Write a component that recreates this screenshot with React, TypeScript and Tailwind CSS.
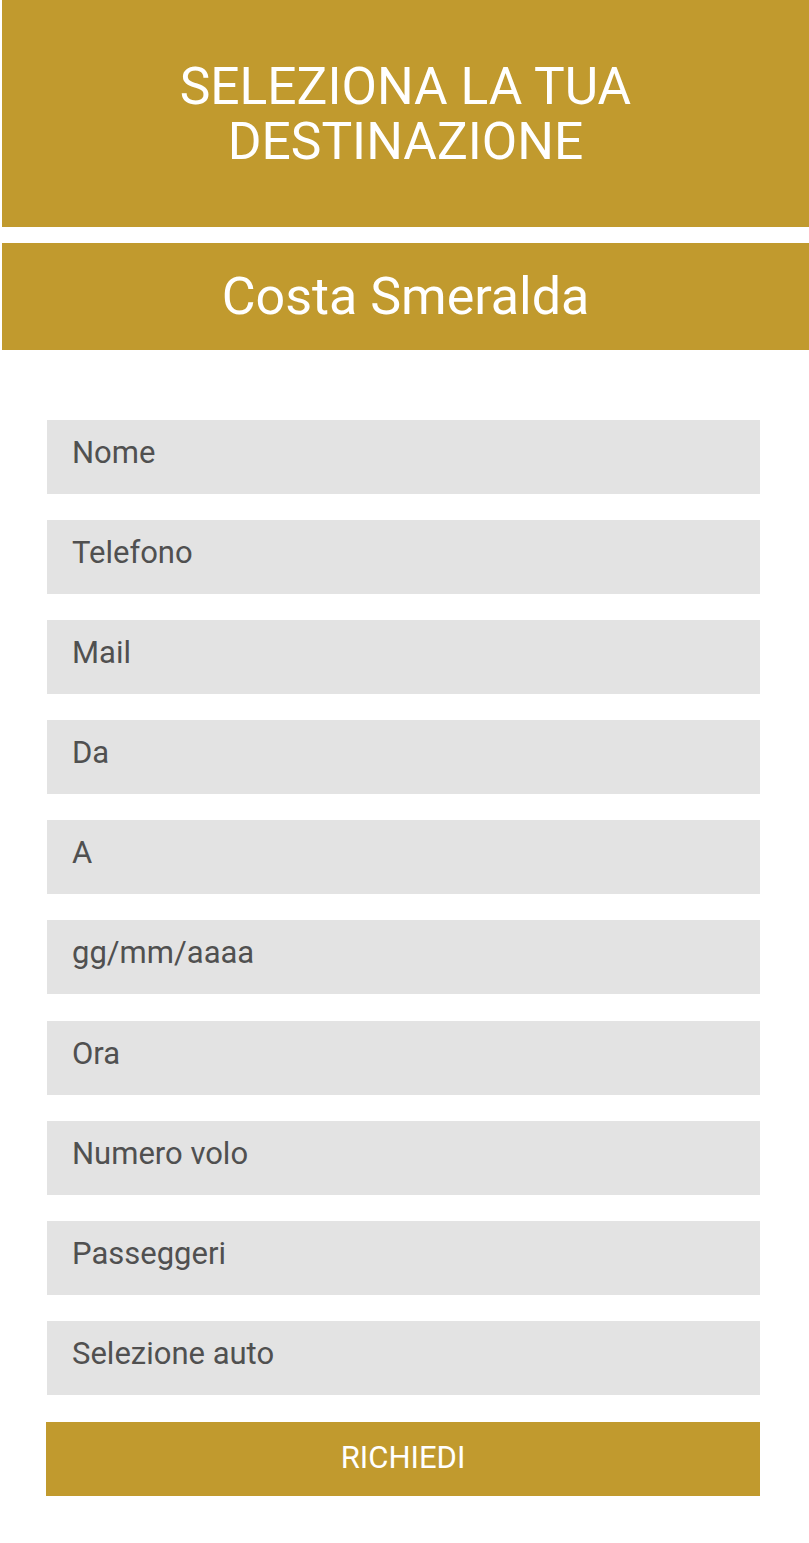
const fields = [
  'Nome',
  'Telefono',
  'Mail',
  'Da',
  'A',
  'gg/mm/aaaa',
  'Ora',
  'Numero volo',
  'Passeggeri',
  'Selezione auto',
];

export default function App() {
  return (
    <div className="w-full min-h-[1543px] bg-white pl-[2px] font-['Roboto',sans-serif]">
      {/* heading */}
      <div className="h-[227px] bg-[#c19a2e] flex items-center justify-center">
        <h1 className="text-center text-white text-[51.5px] leading-[55px]">
          SELEZIONA LA TUA
          <br />
          DESTINAZIONE
        </h1>
      </div>

      <div className="mt-[16px] h-[107px] bg-[#c19a2e] flex items-center justify-center">
        <h2 className="text-white text-[52px] leading-none">Costa Smeralda</h2>
      </div>

      <form className="pt-[70px] pl-[45px] w-[758px] flex flex-col gap-[26.1px]">
        {fields.map((f) => (
          <div
            key={f}
            className="h-[74px] bg-[#e3e3e3] pl-[25px] pt-[17px] text-[31px] leading-none text-[#505050]"
          >
            {f}
          </div>
        ))}
        <button
          type="button"
          className="h-[74px] mt-[1px] -ml-[1px] w-[714px] bg-[#c19a2e] text-white text-[31px] leading-none uppercase pb-[3px]"
        >
          Richiedi
        </button>
      </form>
    </div>
  );
}
